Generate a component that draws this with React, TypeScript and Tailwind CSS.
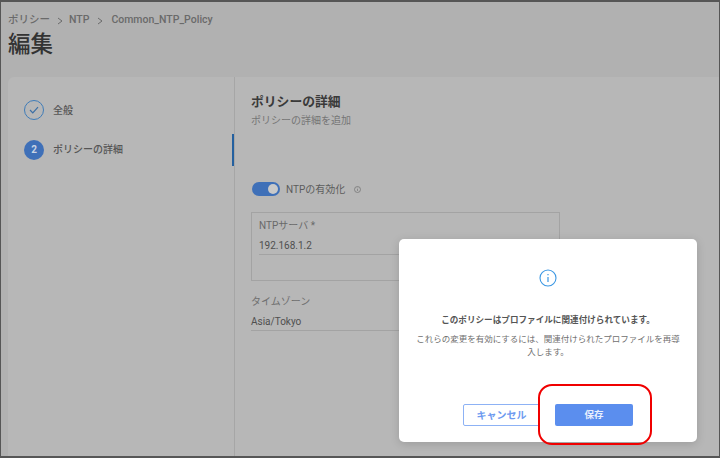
import React from "react";

const font = { fontFamily: '"Roboto", "Noto Sans CJK JP", sans-serif' };

export default function App() {
  return (
    <div style={font} className="relative flex h-[458px] w-[720px] flex-col overflow-hidden border-x border-y-2 border-[#565656] bg-[#b1b1b1]">
      <header className="h-[75px] shrink-0 pl-[7px] pt-[10px]">
        <div className="flex h-[15px] items-center text-[10.5px] font-medium leading-[15px] text-[#6a6a6a]">
          <span>ポリシー</span>
          <svg width="6" height="8" viewBox="0 0 6 8" fill="none" className="ml-[7px] mr-[6px] mt-[2px]">
            <path d="M1 1l4 3-4 3" stroke="#6b6b6b" strokeWidth="1" />
          </svg>
          <span>NTP</span>
          <svg width="6" height="8" viewBox="0 0 6 8" fill="none" className="mx-[8px] mt-[2px]">
            <path d="M1 1l4 3-4 3" stroke="#6b6b6b" strokeWidth="1" />
          </svg>
          <span>Common_NTP_Policy</span>
        </div>
        <h1 className="mt-[2px] text-[22.5px] font-medium leading-[30px] text-[#333333]">編集</h1>
      </header>

      <main className="ml-[7px] flex min-h-0 flex-1 rounded-tl-[6px] bg-[#b7b7b7]">
        <aside className="relative w-[227px] shrink-0 border-r border-[#a6a6a6] pt-[23px]">
          <div className="flex h-[20px] items-center pl-[16px]">
            <span className="flex h-[20px] w-[20px] items-center justify-center rounded-full border border-[#3f7cb8]">
              <svg width="10" height="8" viewBox="0 0 10 8" fill="none">
                <path d="M1 4l2.8 2.8L9 1.2" stroke="#3a6ea5" strokeWidth="1.2" />
              </svg>
            </span>
            <span className="ml-[9px] text-[10px] font-medium text-[#555555]">全般</span>
          </div>
          <div className="mt-[19px] flex h-[21px] items-center pl-[16px]">
            <span className="flex h-[20px] w-[20px] items-center justify-center rounded-full bg-[#3f70b8] text-[10px] font-bold text-[#c9d4e4]">
              2
            </span>
            <span className="ml-[9px] text-[10px] font-medium text-[#555555]">ポリシーの詳細</span>
          </div>
          <span className="absolute right-0 top-[57px] h-[32px] w-[2px] bg-[#24609f]" />
        </aside>

        <section className="min-w-0 flex-1 pl-[16px] pt-[17px]">
          <h2 className="text-[12.8px] font-bold leading-[16px] text-[#3a3a3a]">ポリシーの詳細</h2>
          <p className="mt-[4px] text-[10px] leading-[14px] text-[#757575]">ポリシーの詳細を追加</p>

          <div className="ml-[1px] mt-[53px] flex h-[16px] items-center">
            <span className="flex h-[14px] w-[28px] items-center justify-end rounded-full bg-[#3f70b8] pr-[2px]">
              <span className="h-[10px] w-[10px] rounded-full bg-[#c9c9c9]" />
            </span>
            <span className="ml-[6px] text-[10px] text-[#5c5c5c]">NTPの有効化</span>
            <svg width="7" height="7" viewBox="0 0 7 7" fill="none" className="ml-[9px]">
              <circle cx="3.5" cy="3.5" r="3" stroke="#777777" strokeWidth="0.8" />
              <path d="M3.5 3v2M3.5 1.7v.6" stroke="#777777" strokeWidth="0.7" />
            </svg>
          </div>

          <div className="mt-[15px] h-[69px] w-[309px] border border-[#a3a3a3] px-[7px] pt-[6px]">
            <div className="text-[10px] leading-[14px] text-[#696969]">NTPサーバ *</div>
            <div className="mt-[6px] border-b border-[#a3a3a3] pb-[2px] text-[10px] leading-[13px] text-[#4f4f4f]">192.168.1.2</div>
          </div>

          <div className="mt-[14px] text-[10px] leading-[14px] text-[#6e6e6e]">タイムゾーン</div>
          <div className="mt-[6px] w-[309px] border-b border-[#a3a3a3] pb-[2px] text-[10px] leading-[13px] text-[#4f4f4f]">Asia/Tokyo</div>
        </section>
      </main>

      <div className="absolute left-[398px] top-[237px] flex h-[203px] w-[298px] flex-col items-center rounded-[5px] bg-white pt-[30px] shadow-[0_2px_10px_rgba(0,0,0,0.15)]">
        <svg width="18" height="18" viewBox="0 0 18 18" fill="none">
          <circle cx="9" cy="9" r="8" stroke="#3b97e3" strokeWidth="1.1" />
          <path d="M9 8v5M9 5v1.3" stroke="#3b97e3" strokeWidth="1.2" />
        </svg>
        <p className="mt-[27px] text-[8.6px] font-bold leading-[12px] text-[#555555]">このポリシーはプロファイルに関連付けられています。</p>
        <p className="mt-[7px] w-[266px] text-center text-[8.5px] leading-[13px] text-[#707070]">
          これらの変更を有効にするには、関連付けられたプロファイルを再導入します。
        </p>
        <div className="absolute left-[64px] top-[165px] flex gap-[15px]">
          <button className="h-[22px] w-[77px] rounded-[2px] border border-[#8db2f5] bg-white text-[10px] font-bold text-[#6d9af0]">キャンセル</button>
          <button className="h-[22px] w-[78px] rounded-[2px] bg-[#5b8eee] text-[9.5px] font-bold text-[#e8effd]">保存</button>
        </div>
      </div>

      <div className="absolute left-[537px] top-[382px] h-[61px] w-[114px] rounded-[14px] border-2 border-[#f00000]" />
    </div>
  );
}
